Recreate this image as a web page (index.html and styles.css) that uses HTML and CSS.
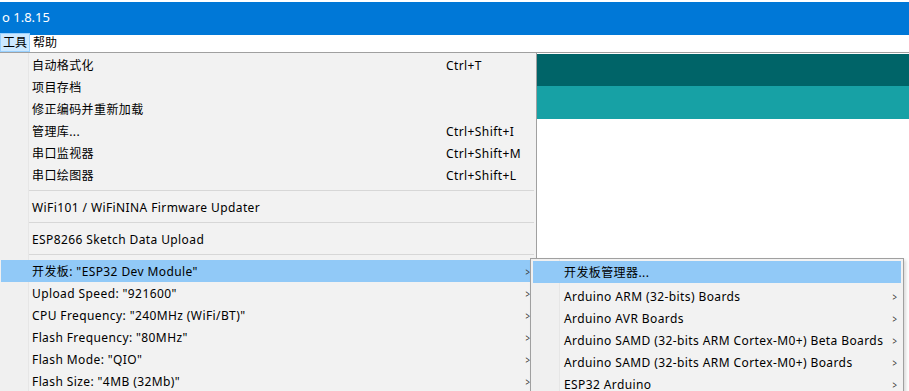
FILE: index.html
```html
<!DOCTYPE html>
<html lang="zh-CN">

<head>
  <meta charset="UTF-8">
  <title>Arduino 1.8.15</title>
  <link rel="stylesheet" href="styles.css">
</head>

<body>
  <div class="titlebar">o 1.8.15</div>

  <div class="menubar">
    <span class="menubar-item active">工具</span>
    <span class="menubar-item">帮助</span>
  </div>

  <div class="workspace">
    <div class="menu main-menu">
      <div class="menu-item"><span class="label">自动格式化</span><span class="shortcut">Ctrl+T</span></div>
      <div class="menu-item"><span class="label">项目存档</span></div>
      <div class="menu-item"><span class="label">修正编码并重新加载</span></div>
      <div class="menu-item"><span class="label">管理库...</span><span class="shortcut">Ctrl+Shift+I</span></div>
      <div class="menu-item"><span class="label">串口监视器</span><span class="shortcut">Ctrl+Shift+M</span></div>
      <div class="menu-item"><span class="label">串口绘图器</span><span class="shortcut">Ctrl+Shift+L</span></div>
      <div class="separator"></div>
      <div class="menu-item"><span class="label">WiFi101 / WiFiNINA Firmware Updater</span></div>
      <div class="separator"></div>
      <div class="menu-item"><span class="label">ESP8266 Sketch Data Upload</span></div>
      <div class="separator"></div>
      <div class="menu-item selected"><span class="label">开发板: "ESP32 Dev Module"</span><span class="arrow">&gt;</span></div>
      <div class="menu-item"><span class="label">Upload Speed: "921600"</span><span class="arrow">&gt;</span></div>
      <div class="menu-item"><span class="label">CPU Frequency: "240MHz (WiFi/BT)"</span><span class="arrow">&gt;</span></div>
      <div class="menu-item"><span class="label">Flash Frequency: "80MHz"</span><span class="arrow">&gt;</span></div>
      <div class="menu-item"><span class="label">Flash Mode: "QIO"</span><span class="arrow">&gt;</span></div>
      <div class="menu-item"><span class="label">Flash Size: "4MB (32Mb)"</span><span class="arrow">&gt;</span></div>
    </div>

    <div class="editor">
      <div class="toolbar-dark"></div>
      <div class="toolbar-light"></div>
    </div>

    <div class="menu sub-menu">
      <div class="menu-item selected first"><span class="label">开发板管理器...</span></div>
      <div class="menu-item"><span class="label">Arduino ARM (32-bits) Boards</span><span class="arrow">&gt;</span></div>
      <div class="menu-item"><span class="label">Arduino AVR Boards</span><span class="arrow">&gt;</span></div>
      <div class="menu-item"><span class="label">Arduino SAMD (32-bits ARM Cortex-M0+) Beta Boards</span><span class="arrow">&gt;</span></div>
      <div class="menu-item"><span class="label">Arduino SAMD (32-bits ARM Cortex-M0+) Boards</span><span class="arrow">&gt;</span></div>
      <div class="menu-item"><span class="label">ESP32 Arduino</span><span class="arrow">&gt;</span></div>
    </div>
  </div>
</body>

</html>
```

FILE: styles.css
```css
* {
  margin: 0;
  padding: 0;
  box-sizing: border-box;
}

body {
  width: 909px;
  height: 391px;
  overflow: hidden;
  background: #fff;
  font-family: "Noto Sans", "Noto Sans CJK SC", sans-serif;
  font-size: 12px;
  letter-spacing: 0.4px;
  color: #000;
}

.titlebar {
  height: 33px;
  margin-top: 2px;
  padding-left: 2px;
  background: #0078d7;
  color: #fff;
  font-size: 13px;
  letter-spacing: 0;
  line-height: 31px;
}

.menubar {
  display: flex;
  height: 20px;
  margin-top: -2px;
  border-bottom: 1px solid #a0a0a0;
  letter-spacing: 0;
}

.menubar-item {
  padding: 0 2px;
  line-height: 18px;
  border: 1px solid transparent;
}

.menubar-item.active {
  background: #cce8ff;
  border-color: #99d1ff;
}

.workspace {
  position: relative;
  display: flex;
  height: 339px;
}

.menu {
  background: linear-gradient(to right, #f0f0f0 0, #f0f0f0 28px, #e6e6e6 28px, #e6e6e6 29px, #f2f2f2 29px);
}

.main-menu {
  flex: none;
  width: 537px;
  padding: 1px 2px 0 0;
  border-right: 1px solid #a0a0a0;
}

.menu-item {
  display: grid;
  grid-template-columns: 1fr 78px 10px;
  align-items: center;
  height: 22px;
  padding-left: 32px;
  white-space: nowrap;
}

.label {
  grid-column: 1;
}

.shortcut {
  grid-column: 2;
}

.arrow {
  grid-column: 3;
  font-size: 11px;
  color: #333;
  transform: scaleX(0.7);
}

.menu-item.selected {
  margin-left: 1px;
  padding-left: 31px;
  background: #91c9f7;
}

.separator {
  height: 10px;
  margin-left: 29px;
  background: linear-gradient(#d7d7d7, #d7d7d7) 0 4px / 100% 1px no-repeat;
}

.editor {
  flex: 1;
  padding-top: 1px;
}

.toolbar-dark {
  height: 32px;
  background: #006468;
}

.toolbar-light {
  height: 33px;
  background: #17a1a5;
}

.sub-menu {
  position: absolute;
  left: 530px;
  top: 205px;
  width: 374px;
  padding: 2px;
  border: 1px solid #a0a0a0;
  box-shadow: 2px 2px 3px rgba(0, 0, 0, 0.15);
}

.sub-menu .menu-item {
  grid-template-columns: 1fr 10px;
  padding-left: 31px;
}

.sub-menu .arrow {
  grid-column: 2;
}

.sub-menu .menu-item.first {
  margin: 0 0 2px 0;
}
```
